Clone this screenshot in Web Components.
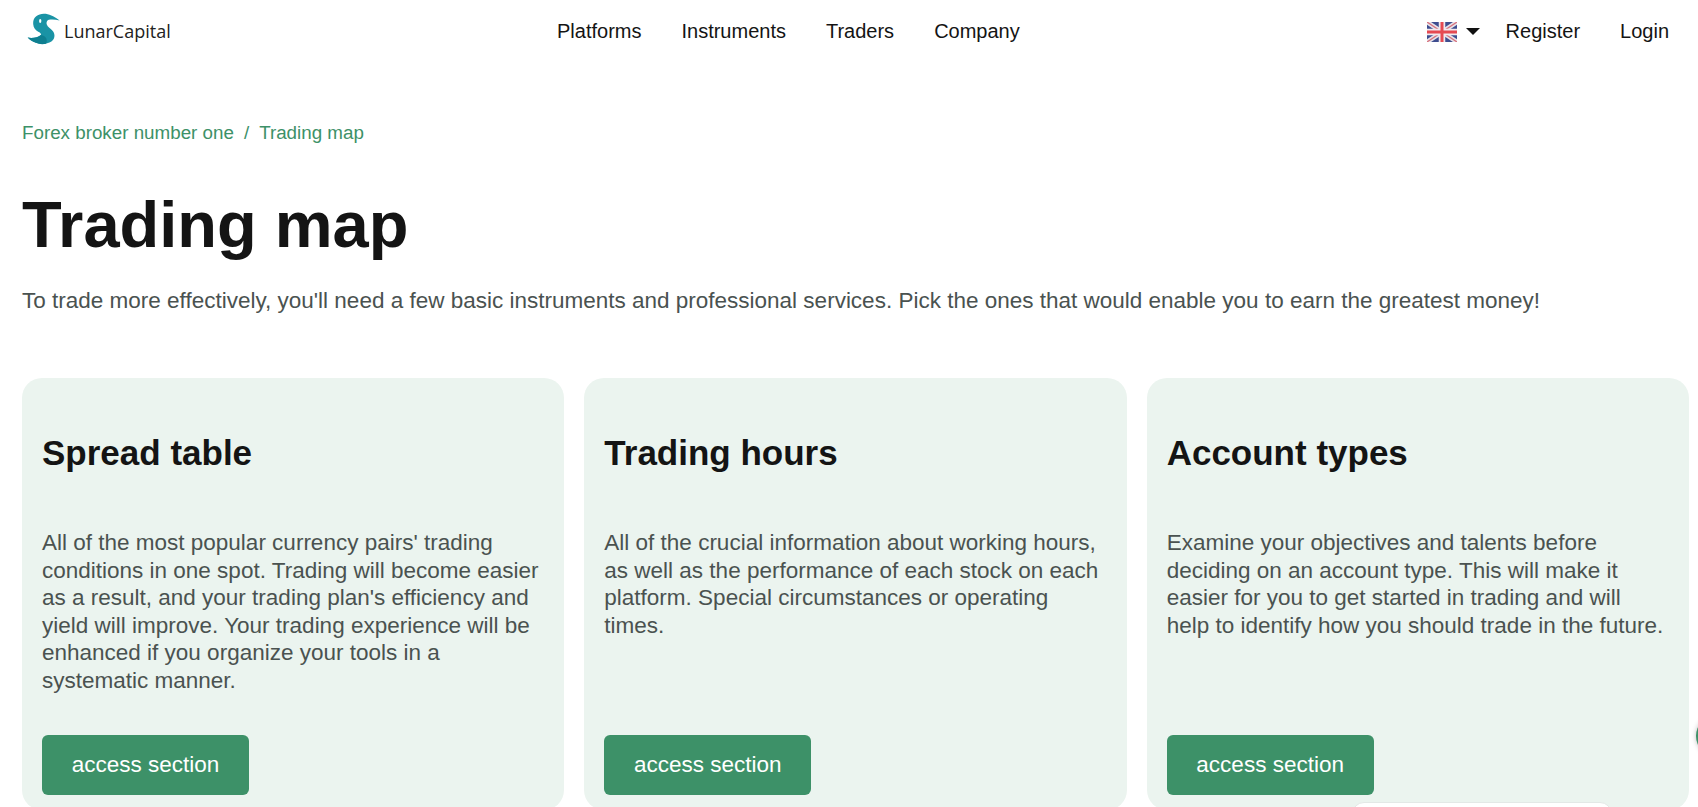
<!DOCTYPE html>
<html lang="en"><head><meta charset="utf-8"><title>Trading map</title>
<style>
html,body{margin:0;padding:0;background:#fff;height:807px;overflow:hidden}
body{font-family:"Liberation Sans",Arial,sans-serif;color:#141414;position:relative}
</style></head><body>
<site-header></site-header>
<page-main>
  <bread-crumbs></bread-crumbs>
  <page-title heading="Trading map">To trade more effectively, you'll need a few basic instruments and professional services. Pick the ones that would enable you to earn the greatest money!</page-title>
  <card-grid>
    <info-card heading="Spread table">All of the most popular currency pairs' trading conditions in one spot. Trading will become easier as a result, and your trading plan's efficiency and yield will improve. Your trading experience will be enhanced if you organize your tools in a systematic manner.</info-card>
    <info-card heading="Trading hours">All of the crucial information about working hours, as well as the performance of each stock on each platform. Special circumstances or operating times.</info-card>
    <info-card heading="Account types">Examine your objectives and talents before deciding on an account type. This will make it easier for you to get started in trading and will help to identify how you should trade in the future.</info-card>
  </card-grid>
</page-main>
<float-bits></float-bits>
<script>
function def(name,html){customElements.define(name,class extends HTMLElement{constructor(){super();this.attachShadow({mode:'open'}).innerHTML=typeof html==='function'?html(this):html}
connectedCallback(){if(typeof html==='function')this.shadowRoot.innerHTML=html(this)}})}
def('site-header',`<style>
:host{display:flex;align-items:center;height:63px;padding:0 29px 0 27px;box-sizing:border-box;font-size:20px;color:#141414}
.logo{display:flex;align-items:center;gap:4px;font:18px "Open Sans",sans-serif;color:#222;width:530px}
.logo svg{margin-top:-6px}
.logo span{margin-top:-1px}
nav{display:flex;gap:40px;margin-right:auto}
.r{display:flex;align-items:center}
.c{width:0;height:0;border:7px solid transparent;border-top:7px solid #111;border-bottom:0;margin:0 26px 0 9px}
.l{margin-left:40px}
svg{display:block}
</style>
<div class="logo"><svg width="33" height="32" viewBox="78 38 100 96"><path d="M97 72C94 50 113 37 135 40 150 42 165 52 177 60 165 57 152 57 144 58 138 60 136 66 138 72 140 79 150 84 156 92 164 102 163 116 152 124 140 132 120 134 105 128 95 124 85 118 80 112 95 115 112 111 120 104 122 100 118 97 112 94 102 89 98 81 97 72Z" fill="#1a93a5"/><path d="M80 112C95 115 112 111 120 104 135 106 142 118 136 131 124 133 113 132 105 128 95 124 85 118 80 112Z" fill="#0f7f90"/><ellipse cx="118" cy="62" rx="3.5" ry="6" fill="#fff"/></svg><span>LunarCapital</span></div>
<nav><span>Platforms</span><span>Instruments</span><span>Traders</span><span>Company</span></nav>
<div class="r"><svg width="30" height="20" viewBox="0 0 60 40" style="margin-left:-1px"><rect width="60" height="40" fill="#3e4d8f"/><path d="M0 0L60 40M60 0L0 40" stroke="#e6e3ea" stroke-width="9"/><path d="M0 0L60 40M60 0L0 40" stroke="#d9707c" stroke-width="2.5"/><path d="M30 0V40M0 20H60" stroke="#f0e9ee" stroke-width="13"/><path d="M30 0V40M0 20H60" stroke="#e64a52" stroke-width="6"/></svg><i class="c"></i><span>Register</span><span class="l">Login</span></div>`);
def('page-main',`<style>:host{display:block;padding:0 9px 0 22px}</style><slot></slot>`);
def('bread-crumbs',`<style>:host{display:flex;gap:10px;margin-top:59px;font-size:18.8px;line-height:21px;color:#3d9168}</style><span>Forex broker number one</span><span>/</span><span>Trading map</span>`);
def('page-title',h=>`<style>:host{display:block}
h1{margin:44px 0 0;font-size:65px;line-height:76px;font-weight:700;color:#141414}
p{margin:24px 0 0;font-size:22.5px;line-height:28px;color:#4a5250}</style><h1>${h.getAttribute('heading')}</h1><p><slot></slot></p>`);
def('card-grid',`<style>:host{display:grid;grid-template-columns:repeat(3,1fr);gap:20px;margin-top:63px}</style><slot></slot>`);
def('info-card',h=>`<style>:host{display:flex;flex-direction:column;height:432px;box-sizing:border-box;padding:55px 20px 15px;background:#ebf4ef;border-radius:20px}
h2{margin:0;font-size:35px;line-height:40px;font-weight:700;color:#141414}
p{margin:56px 0 0;font-size:22.5px;line-height:27.5px;color:#4a5250;flex:1}
a{display:flex;align-items:center;justify-content:center;width:207px;height:60px;background:#3d9168;color:#fff;border-radius:6px;font-size:22.5px}</style>
<h2>${h.getAttribute('heading')}</h2><p><slot></slot></p><a>access section</a>`);
def('float-bits',`<style>:host{display:block}
.w{position:absolute;left:1352px;top:802px;width:260px;height:40px;background:#fff;border:1px solid #e3e8e6;border-radius:12px;box-sizing:border-box}
.o{position:absolute;left:1696px;top:716px;width:40px;height:40px;border-radius:50%;background:#3d9168;box-shadow:0 0 5px rgba(0,0,0,.25)}</style><div class="w"></div><div class="o"></div>`);
</script>
</body></html>
